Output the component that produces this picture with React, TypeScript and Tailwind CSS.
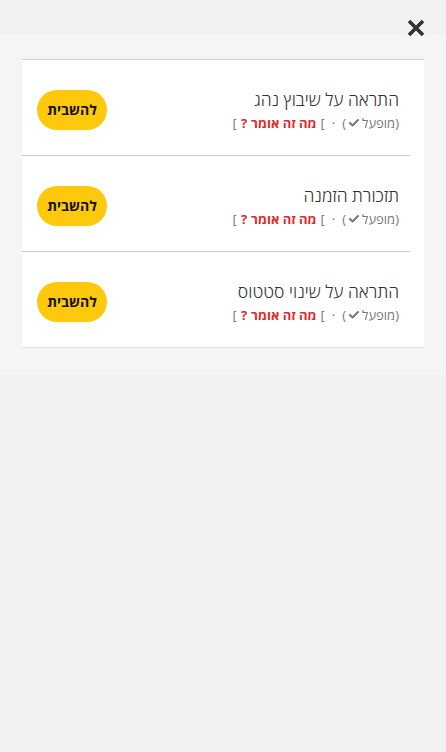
import { Check } from 'lucide-react';

const alerts = [
  { id: 'driver', title: 'התראה על שיבוץ נהג' },
  { id: 'reminder', title: 'תזכורת הזמנה' },
  { id: 'status', title: 'התראה על שינוי סטטוס' },
];

export default function App() {
  return (
    <div
      className="relative min-h-[752px] bg-[#f1f1f1] text-[#333]"
      style={{ fontFamily: '"Open Sans", "Noto Sans", "DejaVu Sans", sans-serif' }}
    >
      <div className="h-[35px]" />
      <button className="absolute right-[21px] top-[19px] w-[18px] h-[18px]" aria-label="close">
        <svg viewBox="0 0 18 18" className="w-[18px] h-[18px]">
          <path d="M2 2 L16 16 M16 2 L2 16" stroke="#333" strokeWidth="3.6" strokeLinecap="butt" />
        </svg>
      </button>

      <div className="bg-[#f5f5f5] pt-6 pb-7 px-[22px]">
        <div className="bg-white border-t border-[#d0d0d0] shadow-[0_1px_1px_rgba(0,0,0,0.06)]" dir="rtl">
          {alerts.map((alert, index) => (
            <div
              key={alert.id}
              className={
                'mr-[14px] flex items-center justify-between pr-[11px] pl-[15px] ' +
                (index < alerts.length - 1 ? 'border-b border-[#cfcfcf] h-[96px]' : 'h-[95px]')
              }
            >
              <div className="flex flex-col items-start pt-[3px]">
                <div className="text-[17.5px] leading-[26px] font-light text-[#333]">{alert.title}</div>
                <div dir="ltr" className="flex items-center text-[13px] leading-[20px] text-[#777] mt-[1px] gap-[4px] self-start">
                  <span>[</span>
                  <span className="text-[#e02b2b] font-bold">?</span>
                  <span className="text-[#e02b2b] font-bold" dir="rtl">מה זה אומר</span>
                  <span>[</span>
                  <span className="mx-[3px]">·</span>
                  <span className="flex items-center">
                    <span>(</span>
                    <Check className="w-[12px] h-[12px] mx-[2px]" strokeWidth={4} />
                    <span dir="rtl">מופעל</span>
                    <span>)</span>
                  </span>
                </div>
              </div>
              <button className="mt-[4px] w-[70px] h-[40px] rounded-full bg-[#fec90a] text-[14px] font-bold text-[#111]">
                להשבית
              </button>
            </div>
          ))}
        </div>
      </div>
    </div>
  );
}
